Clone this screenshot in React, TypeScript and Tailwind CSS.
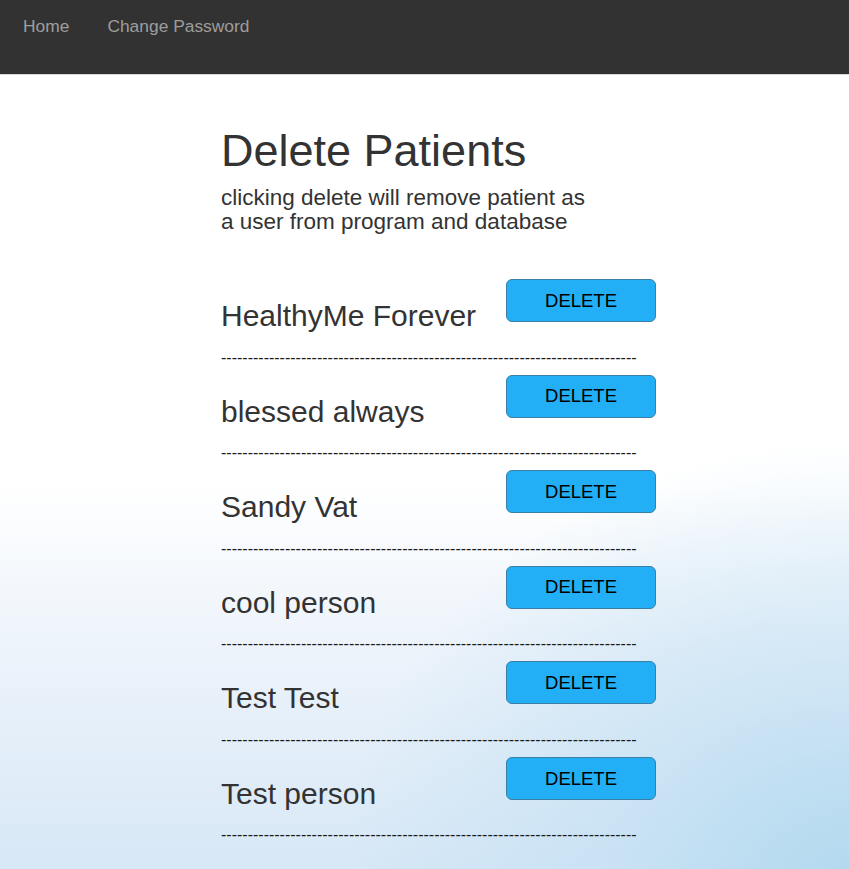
import { useState } from "react";

const startPatients = [
  "HealthyMe Forever",
  "blessed always",
  "Sandy Vat",
  "cool person",
  "Test Test",
  "Test person",
];

const dashes = "-".repeat(78);

const App = () => {
  const [patients, setPatients] = useState<string[]>(startPatients);

  return (
    <div
      className="min-h-screen w-full text-[#333] bg-[radial-gradient(ellipse_60%_50%_at_100%_100%,#b3d9ef_0%,rgba(190,222,242,0.6)_45%,rgba(255,255,255,0)_100%),linear-gradient(180deg,#ffffff_0%,#ffffff_55%,#eef4fb_72%,#d6e7f6_100%)]"
      style={{ fontFamily: '"Liberation Sans", Arial, sans-serif' }}
    >
      <nav className="h-[75px] bg-[#323232] border-b border-[#d9d9d9]">
        <ul className="flex pl-[23px] gap-[38px] pt-[16px] text-[17.4px] leading-[20px] text-[#9d9d9d]">
          <li>
            <a href="#" className="hover:text-white">
              Home
            </a>
          </li>
          <li>
            <a href="#" className="hover:text-white">
              Change Password
            </a>
          </li>
        </ul>
      </nav>

      <div className="pl-[221px] pt-[51px] pb-[30px]">
        <h1 className="text-[45px] leading-[50px]">Delete Patients</h1>
        <p className="mt-[10px] text-[22.5px] leading-[24px]">
          clicking delete will remove patient as
          <br />a user from program and database
        </p>

        <div className="mt-[45px] w-[435px]">
          {patients.map((name) => (
            <div key={name}>
              <div className="flex justify-between h-[53px]">
                <h2 className="mt-[20px] text-[30px] leading-[33px]">{name}</h2>
                <button
                  onClick={() => setPatients((prev) => prev.filter((p) => p !== name))}
                  className="w-[150px] h-[43px] rounded-[6px] border border-[#3b7fa8] bg-[#22aff5] text-black text-[18.5px]"
                >
                  DELETE
                </button>
              </div>
              <div className="mt-[15.5px] mb-[7.1px] text-[16px] leading-[20px] whitespace-nowrap text-[#1a1a1a]">
                {dashes}
              </div>
            </div>
          ))}
        </div>
      </div>
    </div>
  );
};

export default App;
